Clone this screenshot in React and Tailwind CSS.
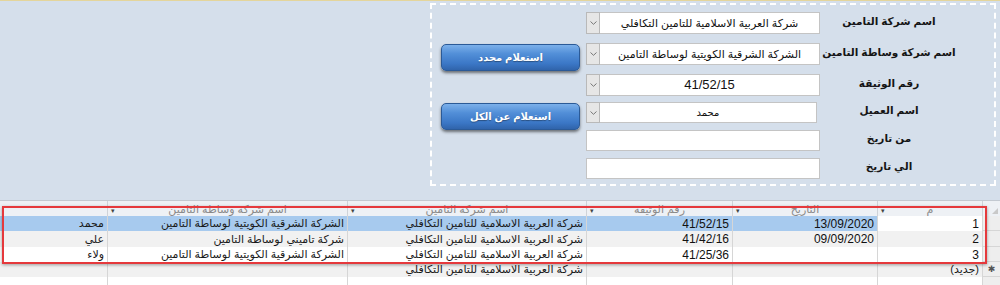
import React from 'react';

const FONT = "font-['Liberation_Sans','DejaVu_Sans',sans-serif]";

const COMPANY = 'شركة العربية الاسلامية للتامين التكافلي';
const EAST = 'الشركة الشرقية الكويتية لوساطة التامين';

// columns listed right to left (the grid is RTL)
const colW = ['w-[18px]', 'w-[105px]', 'w-[145px]', 'w-[146px]', 'w-[239px]', 'w-[240px]', 'w-[107px]'];

const headers = ['', 'م', 'التاريخ', 'رقم الوثيقة', 'اسم شركة التامين', 'اسم شركة وساطة التامين', ''];

const rows = [
  { h: 'h-[15px]', bg: 'bg-[#a7caee]', cells: ['', '1', '13/09/2020', '41/52/15', COMPANY, EAST, 'محمد'] },
  { h: 'h-[16px]', bg: 'bg-[#f1f1f1]', cells: ['', '2', '09/09/2020', '41/42/16', COMPANY, 'شركة تاميني لوساطة التامين', 'علي'] },
  { h: 'h-[15px]', bg: 'bg-white', cells: ['', '3', '', '41/25/36', COMPANY, EAST, 'ولاء'] },
  { h: 'h-[15px]', bg: 'bg-[#f1f1f1]', cells: ['✱', '(جديد)', '', '', COMPANY, '', ''], isNew: true },
];

function Chevron() {
  return (
    <svg width="7" height="4" viewBox="0 0 7 4" className="text-[#777]">
      <polyline points="0.5,0.5 3.5,3.3 6.5,0.5" fill="none" stroke="currentColor" strokeWidth="1" />
    </svg>
  );
}

function Combo({ value, width = 'w-[234px]', textClass = 'text-[11px]' }) {
  return (
    <div className={`flex h-full ${width}`}>
      <div className="flex w-[14px] items-center justify-center border border-[#b9b9b9] bg-[#e6e6e6]">
        <Chevron />
      </div>
      <div dir="rtl" className={`flex flex-1 items-center justify-center border border-l-0 border-[#c4c4c4] bg-white text-[#111] ${textClass}`}>
        {value}
      </div>
    </div>
  );
}

function Field() {
  return <div className="h-full w-[234px] border border-[#c4c4c4] bg-white" />;
}

function FormRow({ label, children, className }) {
  return (
    <div className={`flex ${className}`}>
      {children}
      <div dir="rtl" className="flex w-[156px] items-center justify-center pb-[3px] pr-[18px] text-[10.5px] font-bold text-[#151515]">
        {label}
      </div>
    </div>
  );
}

function BlueButton({ children, className }) {
  return (
    <button className={`h-[27px] w-[139px] rounded-[5px] border border-[#2b5a97] bg-[linear-gradient(to_bottom,#7cb0ea_0%,#528fd8_35%,#3b77c6_75%,#3064ab_100%)] text-[10px] font-bold text-white shadow-[0_2px_3px_rgba(0,0,0,0.5)] [text-shadow:0_1px_1px_rgba(0,0,0,0.35)] ${className}`}>
      <span dir="rtl">{children}</span>
    </button>
  );
}

function HeaderCell({ i, text }) {
  return (
    <div className={`${colW[i]} relative flex shrink-0 items-center justify-center overflow-hidden ${i < 6 ? 'border-l border-[#cfd3d8]' : ''}`}>
      {i > 0 && i < 6 && (
        <span className="absolute left-[3px] top-[6px] text-[7px] leading-none text-[#444]">▾</span>
      )}
      {i === 0 && (
        <span className="absolute right-[2px] bottom-[2px] h-0 w-0 border-b-[6px] border-l-[6px] border-b-[#c9c9c9] border-l-transparent" />
      )}
      <span className="mt-[2px] text-[11px] leading-none text-[#8a8a8a]">{text}</span>
    </div>
  );
}

function Cell({ i, text, row, ri }) {
  const isNum = i >= 1 && i <= 3 && !row.isNew;
  let bg = row.bg;
  if (i === 0) bg = 'bg-[#eeeeee]';
  if (i === 1 && ri === 0) bg = 'bg-white';
  return (
    <div className={`${colW[i]} ${bg} flex shrink-0 items-center overflow-hidden whitespace-nowrap ${i < 6 ? 'border-l border-[#d6d6d6]' : ''} ${i === 0 ? 'justify-center border-b border-b-[#d6d6d6]' : 'pr-[3px]'}`}>
      {isNum ? (
        <span dir="ltr" className="text-[12px] leading-none text-[#111]">{text}</span>
      ) : (
        <span className={`${i === 0 ? 'text-[9px] text-[#555]' : 'text-[11px] text-[#1a1a1a]'} leading-none`}>{text}</span>
      )}
    </div>
  );
}

export default function App() {
  return (
    <div className={`${FONT} flex h-[285px] w-[1000px] flex-col overflow-hidden border-t border-[#e4d59b] bg-[#d5dfeb]`}>
      {/* search panel */}
      <div className="ml-[430px] mt-[2px] h-[183px] w-[566px] border-2 border-dashed border-white">
        <div className="flex pl-[9px] pt-[7px]">
          <div className="flex w-[139px] flex-col">
            <BlueButton className="mt-[32px]">استعلام محدد</BlueButton>
            <BlueButton className="mt-[32px]">استعلام عن الكل</BlueButton>
          </div>
          <div className="ml-[6px] flex flex-col">
            <FormRow label="اسم شركة التامين" className="h-[22px]">
              <Combo value={COMPANY} />
            </FormRow>
            <FormRow label="اسم شركة وساطة التامين" className="mt-[9px] h-[22px]">
              <Combo value={EAST} />
            </FormRow>
            <FormRow label="رقم الوثيقة" className="mt-[9px] h-[22px]">
              <Combo value="41/52/15" textClass="text-[13px]" />
            </FormRow>
            <FormRow label="اسم العميل" className="mt-[6px] h-[21px]">
              <div className="flex w-[234px]">
                <Combo value="محمد" width="w-[231px]" textClass="text-[10px]" />
              </div>
            </FormRow>
            <FormRow label="من تاريخ" className="mt-[7px] h-[21px]">
              <Field />
            </FormRow>
            <FormRow label="الي تاريخ" className="mt-[7px] h-[21px]">
              <Field />
            </FormRow>
          </div>
        </div>
      </div>

      {/* results grid */}
      <div className="relative mt-[14px] flex flex-1 flex-col bg-white">
        <div dir="rtl" className="flex h-[16px] border-t border-[#c3c9d1] bg-[#eef1f5]">
          {headers.map((t, i) => (
            <HeaderCell key={i} i={i} text={t} />
          ))}
        </div>
        {rows.map((row, ri) => (
          <div key={ri} dir="rtl" className={`flex ${row.h}`}>
            {row.cells.map((t, i) => (
              <Cell key={i} i={i} text={t} row={row} ri={ri} />
            ))}
          </div>
        ))}
        <div dir="rtl" className="flex flex-1">
          {colW.map((w, i) => (
            <div key={i} className={`${w} shrink-0 ${i === 0 ? 'bg-[#eeeeee]' : 'bg-white'} ${i < 6 ? 'border-l border-[#d6d6d6]' : ''}`} />
          ))}
        </div>

        {/* highlight frame over the first three records */}
        <div className="pointer-events-none absolute left-[2px] top-[6px] h-[58px] w-[985px] border-2 border-[#e5393c] shadow-[0_1px_3px_rgba(0,0,0,0.35)]" />
      </div>
    </div>
  );
}
